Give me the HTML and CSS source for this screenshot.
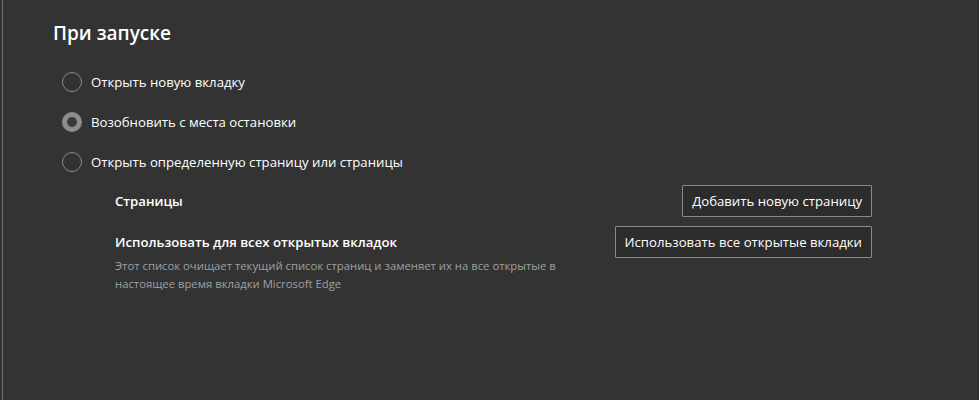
FILE: index.html
```html
<!DOCTYPE html>
<html lang="ru">
<head>
  <meta charset="UTF-8" />
  <title>При запуске</title>
  <link rel="stylesheet" href="styles.css">
</head>
<body>
  <main class="panel">
    <h2 class="title">При запуске</h2>

    <div class="options">
      <label class="option">
        <span class="radio"></span>
        <span>Открыть новую вкладку</span>
      </label>
      <label class="option">
        <span class="radio checked"></span>
        <span>Возобновить с места остановки</span>
      </label>
      <label class="option">
        <span class="radio"></span>
        <span>Открыть определенную страницу или страницы</span>
      </label>
    </div>

    <div class="pages">
      <div class="row">
        <div class="row-text">
          <div class="row-title">Страницы</div>
        </div>
        <button class="btn">Добавить новую страницу</button>
      </div>
      <div class="row">
        <div class="row-text">
          <div class="row-title">Использовать для всех открытых вкладок</div>
          <div class="row-desc">Этот список очищает текущий список страниц и заменяет их на все открытые в настоящее время вкладки Microsoft Edge</div>
        </div>
        <button class="btn">Использовать все открытые вкладки</button>
      </div>
    </div>
  </main>
</body>
</html>
```

FILE: styles.css
```css
html, body {
  margin: 0;
  height: 100%;
  background: #333333;
}

body {
  font-family: "Open Sans", "Noto Sans", sans-serif;
  color: #ffffff;
  padding-left: 2px;
  box-sizing: border-box;
}

.panel {
  height: 100%;
  border-left: 1px solid #6e6e6e;
  padding: 20px 0 0 50px;
  box-sizing: border-box;
}

.title {
  margin: 0 0 26px;
  font-size: 19px;
  font-weight: 600;
  line-height: 26px;
}

.options {
  display: flex;
  flex-direction: column;
  gap: 20px;
  padding-left: 9px;
}

.option {
  display: flex;
  align-items: center;
  gap: 9px;
  font-size: 13.2px;
  line-height: 20px;
}

.radio {
  width: 18px;
  height: 18px;
  border: 1px solid #8a8a8a;
  border-radius: 50%;
  flex: none;
}

.radio.checked {
  width: 10px;
  height: 10px;
  border: 5px solid #8d8d8d;
  background: #3a3a3a;
}

.pages {
  width: 757px;
  margin: 13px 0 0 62px;
  display: flex;
  flex-direction: column;
  gap: 9px;
}

.row {
  display: flex;
  justify-content: space-between;
  align-items: flex-start;
}

.row-text {
  padding-top: 6px;
  max-width: 460px;
}

.row-title {
  font-size: 13.2px;
  font-weight: 600;
  line-height: 20px;
}

.row-desc {
  margin-top: 5px;
  font-size: 11.3px;
  line-height: 18px;
  color: #a0a0a0;
}

.btn {
  font-family: inherit;
  font-size: 13.2px;
  color: #ffffff;
  background: #2c2c2c;
  border: 1px solid #8a8a8a;
  border-radius: 1px;
  height: 32px;
  padding: 0 9px;
  cursor: pointer;
}
```
